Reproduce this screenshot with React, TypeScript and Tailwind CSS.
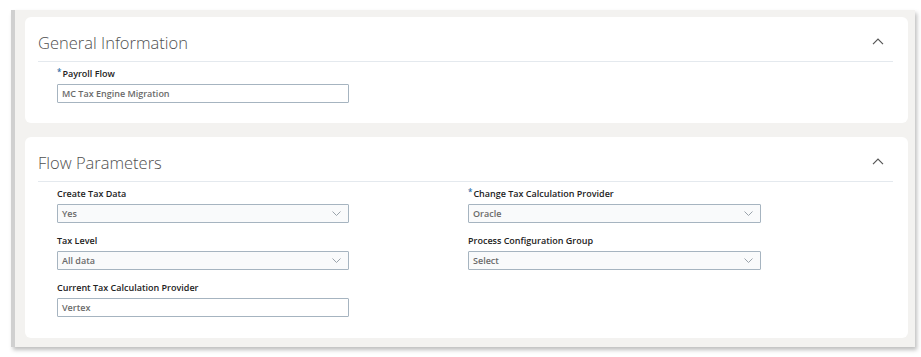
import React from "react";

const font = { fontFamily: '"Open Sans", "Noto Sans", sans-serif' };

function ChevronUp() {
  return (
    <svg width="12" height="7" viewBox="0 0 12 7" fill="none">
      <path d="M1 6.2 L6 1.2 L11 6.2" stroke="#555" strokeWidth="1.2" />
    </svg>
  );
}

function ChevronDown() {
  return (
    <svg width="9" height="5" viewBox="0 0 9 5" fill="none">
      <path d="M0.5 0.5 L4.5 4.5 L8.5 0.5" stroke="#9aa3ab" strokeWidth="1" />
    </svg>
  );
}

function Label({ text, required }: { text: string; required?: boolean }) {
  return (
    <div className="h-[14px] flex items-center text-[9px] font-semibold text-[#222] leading-[14px] whitespace-nowrap">
      {required ? (
        <span className="text-[#2f6fa8] text-[8px] -mt-[5px] mr-[1px]">*</span>
      ) : null}
      <span>{text}</span>
    </div>
  );
}

function Field({
  label,
  value,
  required,
  select,
  width,
}: {
  label: string;
  value: string;
  required?: boolean;
  select?: boolean;
  width: string;
}) {
  return (
    <div className={`${width} flex flex-col`}>
      <Label text={label} required={required} />
      <div
        className={`mt-[3px] h-[19px] border border-[#a6b4c0] rounded-[1px] flex items-center justify-between pl-[4px] pr-[7px] ${
          select ? "bg-[#f9fafb]" : "bg-white"
        }`}
      >
        <span className="text-[9px] font-semibold text-[#6a6a6a] leading-none">{value}</span>
        {select ? <ChevronDown /> : null}
      </div>
    </div>
  );
}

function Card({
  title,
  height,
  children,
}: {
  title: string;
  height: string;
  children: React.ReactNode;
}) {
  return (
    <div className={`${height} w-[883px] bg-white rounded-[6px] flex flex-col`}>
      <div className="ml-[13px] mr-[15px] h-[45px] border-b border-[#e4e9ee] flex items-start justify-between pt-[13px]">
        <span className="text-[16.5px] font-light text-[#4f4f4f] leading-[26px]">{title}</span>
        <span className="mr-[9px] mt-[8px]">
          <ChevronUp />
        </span>
      </div>
      {children}
    </div>
  );
}

export default function App() {
  return (
    <div className="w-[921px] h-[357px] bg-white relative overflow-hidden" style={font}>
      <div className="ml-[11px] pt-[10px]">
        <div className="w-[904px] h-[337px] bg-[#f3f2f0] border-l-[4px] border-[#d0d0d0] shadow-[2px_3px_4px_rgba(0,0,0,0.25)] pl-[10px] pt-[7px] flex flex-col gap-[14px]">
          <Card title="General Information" height="h-[106px]">
            <div className="ml-[32px] mt-[5px]">
              <Field label="Payroll Flow" value="MC Tax Engine Migration" required width="w-[292px]" />
            </div>
          </Card>
          <Card title="Flow Parameters" height="h-[201px]">
            <div className="ml-[32px] mt-[5px] grid grid-cols-[292px_293px] gap-x-[119px] gap-y-[11px]">
              <Field label="Create Tax Data" value="Yes" select width="w-[292px]" />
              <Field label="Change Tax Calculation Provider" value="Oracle" select required width="w-[293px]" />
              <Field label="Tax Level" value="All data" select width="w-[292px]" />
              <Field label="Process Configuration Group" value="Select" select width="w-[293px]" />
              <Field label="Current Tax Calculation Provider" value="Vertex" width="w-[292px]" />
            </div>
          </Card>
        </div>
      </div>
    </div>
  );
}
